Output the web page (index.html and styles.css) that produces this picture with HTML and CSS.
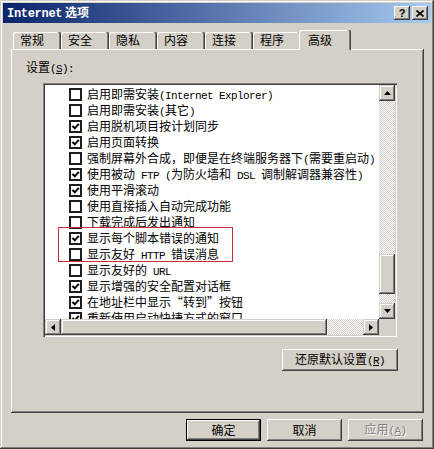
FILE: index.html
```html
<!DOCTYPE html>
<html lang="zh-CN">
<head>
    <meta charset="UTF-8">
    <title>Internet 选项</title>
    <link rel="stylesheet" href="styles.css">
</head>
<body>
    <div class="window">
        <div class="titlebar">
            <span class="title"><span class="en">Internet</span> 选项</span>
            <div class="caption-buttons">
                <span class="cap-btn help">?</span>
                <span class="cap-btn">
                    <svg width="8" height="7" viewBox="0 0 8 7"><path d="M0.5 0.5 L7.5 6.5 M7.5 0.5 L0.5 6.5" stroke="#000" stroke-width="1.6"/></svg>
                </span>
            </div>
        </div>

        <div class="tabs">
            <div class="tab">常规</div>
            <div class="tab">安全</div>
            <div class="tab">隐私</div>
            <div class="tab">内容</div>
            <div class="tab">连接</div>
            <div class="tab">程序</div>
            <div class="tab active">高级</div>
        </div>

        <div class="sheet">
            <div class="label">设置<span class="en">(<u>S</u>):</span></div>

            <div class="listbox">
                <div class="rows">
                    <div class="row"><span class="check"></span><span class="text">启用即需安装<span class="en">(Internet Explorer)</span></span></div>
                    <div class="row"><span class="check"></span><span class="text">启用即需安装<span class="en">(</span>其它<span class="en">)</span></span></div>
                    <div class="row"><span class="check on"></span><span class="text">启用脱机项目按计划同步</span></div>
                    <div class="row"><span class="check on"></span><span class="text">启用页面转换</span></div>
                    <div class="row"><span class="check"></span><span class="text">强制屏幕外合成，即便是在终端服务器下<span class="en">(</span>需要重启动<span class="en">)</span></span></div>
                    <div class="row"><span class="check on"></span><span class="text">使用被动<span class="en"> FTP (</span>为防火墙和<span class="en"> DSL </span>调制解调器兼容性<span class="en">)</span></span></div>
                    <div class="row"><span class="check on"></span><span class="text">使用平滑滚动</span></div>
                    <div class="row"><span class="check"></span><span class="text">使用直接插入自动完成功能</span></div>
                    <div class="row"><span class="check"></span><span class="text">下载完成后发出通知</span></div>
                    <div class="row"><span class="check on"></span><span class="text">显示每个脚本错误的通知</span></div>
                    <div class="row"><span class="check"></span><span class="text">显示友好<span class="en"> HTTP </span>错误消息</span></div>
                    <div class="row"><span class="check"></span><span class="text">显示友好的<span class="en"> URL</span></span></div>
                    <div class="row"><span class="check on"></span><span class="text">显示增强的安全配置对话框</span></div>
                    <div class="row"><span class="check on"></span><span class="text">在地址栏中显示“转到”按钮</span></div>
                    <div class="row"><span class="check on"></span><span class="text">重新使用启动快捷方式的窗口</span></div>
                </div>

                <div class="vscroll">
                    <span class="sb-btn"><svg width="7" height="4" viewBox="0 0 7 4"><path d="M3.5 0 L7 4 L0 4 Z"/></svg></span>
                    <span class="track" style="height: 153px"></span>
                    <span class="thumb" style="height: 40px"></span>
                    <span class="track" style="height: 9px"></span>
                    <span class="sb-btn"><svg width="7" height="4" viewBox="0 0 7 4"><path d="M0 0 L7 0 L3.5 4 Z"/></svg></span>
                </div>

                <div class="hscroll">
                    <span class="sb-btn"><svg width="4" height="7" viewBox="0 0 4 7"><path d="M0 3.5 L4 0 L4 7 Z"/></svg></span>
                    <span class="thumb" style="width: 266px"></span>
                    <span class="track" style="width: 36px"></span>
                    <span class="sb-btn"><svg width="4" height="7" viewBox="0 0 4 7"><path d="M0 0 L4 3.5 L0 7 Z"/></svg></span>
                </div>

                <div class="corner"></div>

                <!-- red marker drawn over the two rows -->
                <div class="highlight"></div>
            </div>

            <div class="sheet-actions">
                <button class="btn reset">还原默认设置<span class="en">(<u>R</u>)</span></button>
            </div>
        </div>

        <div class="footer">
            <button class="btn default">确定</button>
            <button class="btn">取消</button>
            <button class="btn disabled">应用<span class="en">(<u>A</u>)</span></button>
        </div>
    </div>
</body>
</html>
```

FILE: styles.css
```css
* {
    box-sizing: border-box;
}

body {
    margin: 0;
    background-color: #d4d0c8;
    font-family: "Noto Sans CJK SC", sans-serif;
    font-size: 12px;
    line-height: 16px;
    color: #000;
}

.en {
    font-family: "Liberation Mono", monospace;
    font-size: 11px;
    letter-spacing: -0.6px;
    white-space: pre;
}

.window {
    width: 434px;
    height: 449px;
    padding: 3px;
    display: flex;
    flex-direction: column;
    background-color: #d4d0c8;
    box-shadow: inset -1px -1px #404040, inset 1px 1px #d4d0c8,
                inset -2px -2px #808080, inset 2px 2px #fff;
}

.titlebar {
    height: 20px;
    display: flex;
    align-items: center;
    justify-content: space-between;
    padding: 0 3px 0 4px;
    background: linear-gradient(to right, #0a246a, #a6caf0);
    color: #fff;
    font-weight: bold;
}

.title .en {
    font-size: 12px;
    letter-spacing: -0.3px;
}

.caption-buttons {
    display: flex;
    gap: 2px;
}

.cap-btn {
    width: 16px;
    height: 14px;
    display: flex;
    align-items: center;
    justify-content: center;
    background-color: #d4d0c8;
    color: #000;
    font-family: "Liberation Sans", sans-serif;
    font-size: 11px;
    line-height: 14px;
    box-shadow: inset -1px -1px #404040, inset 1px 1px #fff,
                inset -2px -2px #808080;
}

.tabs {
    height: 19px;
    margin: 7px 0 0 10px;
    display: flex;
    align-items: flex-end;
}

.tab {
    width: 48px;
    height: 17px;
    padding-left: 7px;
    line-height: 16px;
    background-color: #d4d0c8;
    border-radius: 2px 2px 0 0;
    box-shadow: inset -1px 0 #404040, inset -2px 0 #808080,
                inset 1px 1px #fff;
}

.tab.active {
    position: relative;
    z-index: 1;
    width: 52px;
    height: 20px;
    margin: 0 0 -1px -2px;
    padding: 2px 0 0 9px;
}

.sheet {
    height: 364px;
    margin: 0 7px 0 8px;
    padding: 11px 0 0 15px;
    box-shadow: inset -1px -1px #404040, inset 1px 1px #fff,
                inset -2px -2px #808080;
}

.label {
    line-height: 14px;
}

.listbox {
    position: relative;
    width: 354px;
    height: 254px;
    margin: 7px 0 0 17px;
    padding: 2px;
    display: grid;
    grid-template-columns: 334px 16px;
    grid-template-rows: 234px 16px;
    background-color: #fff;
    box-shadow: inset 1px 1px #808080, inset 2px 2px #404040,
                inset -1px -1px #fff, inset -2px -2px #d4d0c8;
}

.rows {
    overflow: hidden;
    padding-top: 1px;
}

.row {
    height: 16px;
    display: flex;
    align-items: center;
    gap: 5px;
    padding-left: 24px;
    white-space: nowrap;
}

.row .text {
    display: block;
    height: 16px;
    line-height: 16px;
    overflow: hidden;
}

.check {
    flex: none;
    width: 13px;
    height: 13px;
    border: 2px solid #1e1e1e;
    background-color: #fff;
}

.check.on {
    background: #fff url("data:image/svg+xml,%3Csvg xmlns='http://www.w3.org/2000/svg' width='9' height='9'%3E%3Cpath d='M1.5 4 L3.8 6.3 L7.8 1.8' fill='none' stroke='%23000' stroke-width='2'/%3E%3C/svg%3E") no-repeat center;
}

.vscroll {
    display: flex;
    flex-direction: column;
}

.hscroll {
    display: flex;
}

.sb-btn {
    flex: none;
    width: 16px;
    height: 16px;
    display: flex;
    align-items: center;
    justify-content: center;
    background-color: #d4d0c8;
    box-shadow: inset -1px -1px #404040, inset 1px 1px #d4d0c8,
                inset -2px -2px #808080, inset 2px 2px #fff;
}

.thumb {
    flex: none;
    background-color: #d4d0c8;
    box-shadow: inset -1px -1px #404040, inset 1px 1px #d4d0c8,
                inset -2px -2px #808080, inset 2px 2px #fff;
}

.vscroll .thumb,
.vscroll .track {
    width: 16px;
}

.hscroll .thumb,
.hscroll .track {
    height: 16px;
}

.track {
    flex: none;
    background: repeating-conic-gradient(#fff 0 25%, #d4d0c8 0 50%) 0 0 / 2px 2px;
}

.corner {
    background-color: #d4d0c8;
}

.highlight {
    position: absolute;
    left: 15px;
    top: 144px;
    width: 175px;
    height: 35px;
    border: 1px solid #cc2a36;
}

.sheet-actions {
    width: 355px;
    margin: 12px 0 0 17px;
    display: flex;
    justify-content: flex-end;
}

.btn {
    height: 22px;
    padding: 0;
    border: none;
    background-color: #d4d0c8;
    font-family: "Noto Sans CJK SC", sans-serif;
    font-size: 12px;
    line-height: 16px;
    color: #000;
    box-shadow: inset -1px -1px #404040, inset 1px 1px #fff,
                inset -2px -2px #808080;
}

.reset {
    width: 116px;
}

.footer {
    margin: 6px 8px 0 0;
    display: flex;
    justify-content: flex-end;
    gap: 6px;
}

.footer .btn {
    width: 75px;
}

.btn.default {
    box-shadow: inset 0 0 0 1px #000, inset -2px -2px #404040,
                inset 2px 2px #fff, inset -3px -3px #808080;
}

.btn.disabled {
    color: #808080;
    text-shadow: 1px 1px #fff;
}
```
